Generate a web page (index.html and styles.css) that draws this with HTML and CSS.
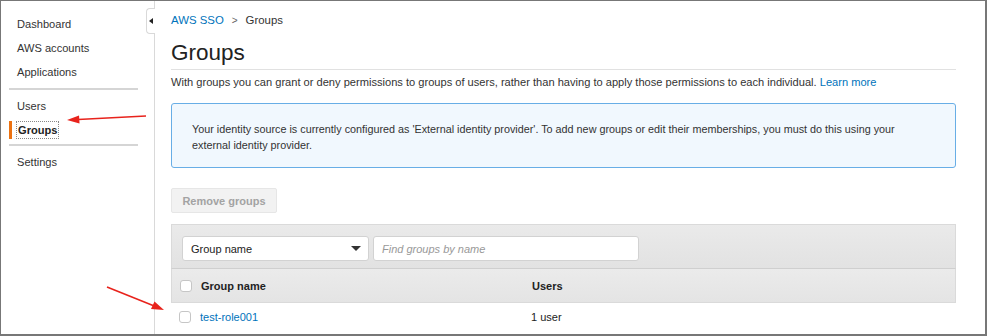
FILE: index.html
```html
<!DOCTYPE html>
<html lang="en">
<head>
    <meta charset="UTF-8">
    <title>Groups - AWS SSO</title>
    <link rel="stylesheet" href="styles.css">
</head>
<body>
    <div class="frame">
        <nav class="sidebar">
            <a class="nav-item" href="#">Dashboard</a>
            <a class="nav-item" href="#">AWS accounts</a>
            <a class="nav-item" href="#">Applications</a>
            <div class="nav-divider"></div>
            <a class="nav-item" href="#">Users</a>
            <a class="nav-item active" href="#"><span>Groups</span></a>
            <div class="nav-divider"></div>
            <a class="nav-item" href="#">Settings</a>
            <div class="collapse-tab"><span class="tab-arrow"></span></div>
        </nav>

        <main class="content">
            <div class="breadcrumb">
                <a href="#">AWS SSO</a>
                <span class="sep">&gt;</span>
                <span>Groups</span>
            </div>
            <h1 class="page-title">Groups</h1>
            <p class="intro">With groups you can grant or deny permissions to groups of users, rather than having to apply those permissions to each individual. <a href="#">Learn more</a></p>

            <div class="info-box">
                Your identity source is currently configured as 'External identity provider'. To add new groups or edit their memberships, you must do this using your external identity provider.
            </div>

            <button class="btn-disabled" disabled>Remove groups</button>

            <div class="table-panel">
                <div class="filter-bar">
                    <div class="select-box">Group name <span class="caret"></span></div>
                    <div class="search-box">Find groups by name</div>
                </div>
                <div class="table-head">
                    <span class="checkbox"></span>
                    <span class="col-name">Group name</span>
                    <span class="col-users">Users</span>
                </div>
                <div class="table-row">
                    <span class="checkbox"></span>
                    <a class="col-name" href="#">test-role001</a>
                    <span class="col-users">1 user</span>
                </div>
            </div>
        </main>

        <!-- red annotation arrows -->
        <svg class="annotations" width="987" height="336" viewBox="0 0 987 336">
            <line x1="146" y1="116" x2="78" y2="119.5" stroke="#e8231c" stroke-width="1.6"/>
            <polygon points="67,120 79,115.5 79.5,123.5" fill="#e8231c"/>
            <line x1="107" y1="287" x2="153" y2="305.5" stroke="#e8231c" stroke-width="1.6"/>
            <polygon points="164,310 151,309 154.5,301.5" fill="#e8231c"/>
        </svg>
    </div>
</body>
</html>
```

FILE: styles.css
```css
body {
    margin: 0;
    font-family: 'Liberation Sans', Arial, sans-serif;
    color: #333;
    background: #fff;
}
a {
    color: #0073bb;
    text-decoration: none;
}
.frame {
    position: relative;
    display: flex;
    width: 987px;
    height: 336px;
    box-sizing: border-box;
    border: 1px solid #777;
    border-right-width: 2px;
    border-bottom-width: 2px;
    overflow: hidden;
}

/* sidebar */
.sidebar {
    position: relative;
    flex: 0 0 154px;
    box-sizing: border-box;
    border-right: 1px solid #d9d9d9;
    padding: 11px 16px 0 8px;
    display: flex;
    flex-direction: column;
}
.nav-item {
    display: flex;
    align-items: center;
    height: 24px;
    padding-left: 8px;
    font-size: 11.1px;
    color: #333;
}
.nav-item.active {
    font-weight: bold;
    color: #222;
    border-left: 3px solid #ec7211;
    padding-left: 5px;
    height: 18px;
    margin: 3px 0 2px;
}
.nav-item.active span {
    outline: 1px dotted #888;
    padding: 2px 1px;
}
.nav-divider {
    height: 2px;
    background: #d5d5d5;
    margin: 4px 0;
}
.nav-item.active + .nav-divider {
    margin: 3px 0 4px;
}
.collapse-tab {
    position: absolute;
    right: -1px;
    top: 7px;
    width: 8px;
    height: 24px;
    border: 1px solid #d9d9d9;
    border-right: none;
    border-radius: 4px 0 0 4px;
    background: #fff;
    display: flex;
    align-items: center;
    justify-content: center;
}
.tab-arrow {
    width: 0;
    height: 0;
    border-top: 3.5px solid transparent;
    border-bottom: 3.5px solid transparent;
    border-right: 4px solid #222;
}

/* main content */
.content {
    flex: 1;
    padding: 12px 29px 0 16px;
    font-size: 11px;
}
.breadcrumb {
    display: flex;
    align-items: center;
    gap: 8px;
    height: 14px;
    font-size: 11.4px;
    color: #333;
}
.breadcrumb .sep {
    color: #666;
    font-size: 10px;
}
.page-title {
    margin: 13px 0 0;
    font-size: 22.5px;
    font-weight: normal;
    color: #222;
    line-height: 26px;
    padding-bottom: 3px;
    border-bottom: 1px solid #e1e1e1;
}
.intro {
    margin: 5px 0 0;
    font-size: 11.1px;
    line-height: 14px;
    color: #333;
}
.info-box {
    margin-top: 14px;
    box-sizing: border-box;
    height: 65px;
    padding: 17px 19px 0 20px;
    border: 1px solid #68aee6;
    border-radius: 3px;
    background: #f1f8fe;
    font-size: 10.8px;
    line-height: 16px;
    color: #333;
}
.btn-disabled {
    display: block;
    margin-top: 20px;
    width: 106px;
    height: 25px;
    border: 1px solid #e6e6e6;
    border-radius: 2px;
    background: #f2f2f2;
    color: #a3a3a3;
    font-family: inherit;
    font-weight: bold;
    font-size: 11px;
    padding: 0;
}

/* table */
.table-panel {
    margin-top: 11px;
}
.filter-bar {
    display: flex;
    gap: 4px;
    height: 45px;
    box-sizing: border-box;
    padding: 11px 10px 0;
    background: linear-gradient(#eaeaea, #e2e2e2);
    border: 1px solid #dadada;
    border-bottom: 1px solid #cfcfcf;
}
.select-box,
.search-box {
    box-sizing: border-box;
    height: 25px;
    background: #fff;
    border: 1px solid #d2d2d2;
    border-radius: 3px;
    display: flex;
    align-items: center;
    padding-left: 8px;
    font-size: 11px;
}
.select-box {
    width: 187px;
    color: #222;
    justify-content: space-between;
    padding-right: 7px;
}
.caret {
    width: 0;
    height: 0;
    border-left: 5px solid transparent;
    border-right: 5px solid transparent;
    border-top: 5px solid #333;
}
.search-box {
    width: 266px;
    color: #999;
    font-style: italic;
}
.table-head,
.table-row {
    display: flex;
    align-items: center;
    padding-left: 8px;
}
.table-head {
    height: 34px;
    box-sizing: border-box;
    background: linear-gradient(#ebebeb, #e4e4e4);
    border: 1px solid #dadada;
    border-top: none;
    font-weight: bold;
    color: #222;
}
.table-row {
    height: 28px;
}
.checkbox {
    width: 12px;
    height: 12px;
    box-sizing: border-box;
    border: 1px solid #c6c6c6;
    border-radius: 3px;
    background: #fff;
    margin-right: 9px;
}
.col-name {
    width: 331px;
}
.table-row .col-name {
    color: #0073bb;
}
.col-users {
    color: #222;
}

.annotations {
    position: absolute;
    left: -1px;
    top: -1px;
    pointer-events: none;
}
```
